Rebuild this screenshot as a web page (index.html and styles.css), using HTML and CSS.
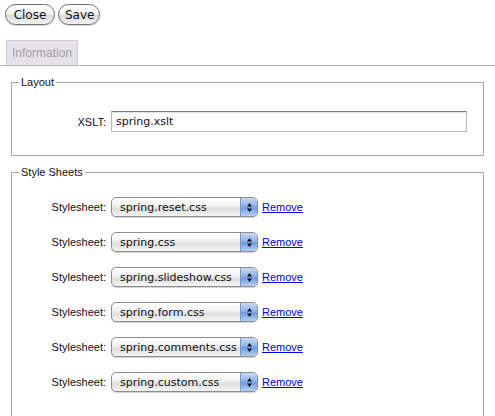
FILE: index.html
```html
<!DOCTYPE html>
<html>
<head>
<meta charset="utf-8">
<link rel="stylesheet" href="styles.css">
</head>
<body>
<div class="toolbar">
  <button class="btn btn-close">Close</button>
  <button class="btn btn-save">Save</button>
</div>
<div class="tabs">
  <div class="tab">Information</div>
</div>
<fieldset class="group group-layout">
  <legend>Layout</legend>
  <div class="row">
    <label class="lbl">XSLT:</label>
    <div class="textbox">spring.xslt</div>
  </div>
</fieldset>
<fieldset class="group group-sheets">
  <legend>Style Sheets</legend>
  <div class="row sheet"><label class="lbl">Stylesheet:</label><div class="select"><span class="val">spring.reset.css</span><span class="arrow"><svg width="7" height="11" viewBox="0 0 7 11"><path d="M3.5 1 L6 4.5 L1 4.5Z M3.5 10 L6 6.5 L1 6.5Z" fill="#111"/></svg></span></div><a class="remove" href="#">Remove</a></div>
  <div class="row sheet"><label class="lbl">Stylesheet:</label><div class="select"><span class="val">spring.css</span><span class="arrow"><svg width="7" height="11" viewBox="0 0 7 11"><path d="M3.5 1 L6 4.5 L1 4.5Z M3.5 10 L6 6.5 L1 6.5Z" fill="#111"/></svg></span></div><a class="remove" href="#">Remove</a></div>
  <div class="row sheet"><label class="lbl">Stylesheet:</label><div class="select"><span class="val">spring.slideshow.css</span><span class="arrow"><svg width="7" height="11" viewBox="0 0 7 11"><path d="M3.5 1 L6 4.5 L1 4.5Z M3.5 10 L6 6.5 L1 6.5Z" fill="#111"/></svg></span></div><a class="remove" href="#">Remove</a></div>
  <div class="row sheet"><label class="lbl">Stylesheet:</label><div class="select"><span class="val">spring.form.css</span><span class="arrow"><svg width="7" height="11" viewBox="0 0 7 11"><path d="M3.5 1 L6 4.5 L1 4.5Z M3.5 10 L6 6.5 L1 6.5Z" fill="#111"/></svg></span></div><a class="remove" href="#">Remove</a></div>
  <div class="row sheet"><label class="lbl">Stylesheet:</label><div class="select"><span class="val">spring.comments.css</span><span class="arrow"><svg width="7" height="11" viewBox="0 0 7 11"><path d="M3.5 1 L6 4.5 L1 4.5Z M3.5 10 L6 6.5 L1 6.5Z" fill="#111"/></svg></span></div><a class="remove" href="#">Remove</a></div>
  <div class="row sheet"><label class="lbl">Stylesheet:</label><div class="select"><span class="val">spring.custom.css</span><span class="arrow"><svg width="7" height="11" viewBox="0 0 7 11"><path d="M3.5 1 L6 4.5 L1 4.5Z M3.5 10 L6 6.5 L1 6.5Z" fill="#111"/></svg></span></div><a class="remove" href="#">Remove</a></div>
</fieldset>
</body>
</html>
```
FILE: styles.css
```css
html, body {
  margin: 0;
  padding: 0;
  background: #fff;
  font-family: "Liberation Sans", Arial, sans-serif;
  font-size: 11px;
  color: #111;
  overflow: hidden;
}
.toolbar {
  display: flex;
  gap: 3px;
  padding: 4px 0 0 5px;
}
.btn {
  height: 21px;
  margin: 0;
  padding: 0 6px;
  border: 1px solid #6f6f6f;
  border-radius: 11px;
  background: linear-gradient(#ffffff 0%, #f4f4f4 45%, #dcdcdc 55%, #f2f2f2 100%);
  font-family: "DejaVu Sans", sans-serif;
  font-size: 12px;
  color: #111;
  box-shadow: 0 1px 1px rgba(0,0,0,0.15);
}
.btn-close { width: 50px; }
.btn-save { width: 42px; }
.tabs {
  margin-top: 15px;
  padding-left: 6px;
  border-bottom: 1px solid #b5b5b5;
  display: flex;
}
.tab {
  width: 70px;
  height: 24px;
  line-height: 24px;
  text-align: center;
  background: #e6e1e9;
  border: 1px solid #cfcbd2;
  border-bottom: none;
  color: #a3a0a6;
  font-size: 12px;
}
.group {
  margin: 10px 11px 0;
  padding: 0;
  border: 1px solid #a8a8a8;
  min-width: 0;
}
.group legend {
  margin-left: 7px;
  padding: 0 2px;
  font-size: 11px;
  color: #111;
}
.group-layout {
  padding-top: 23px;
  padding-bottom: 23px;
}
.group-sheets {
  margin-top: 10px;
  padding-top: 19px;
  height: 260px;
  box-sizing: border-box;
}
.row {
  display: flex;
  align-items: center;
}
.lbl {
  width: 99px;
  text-align: right;
  padding-right: 5px;
  box-sizing: border-box;
  flex: none;
}
.textbox {
  width: 356px;
  height: 21px;
  box-sizing: border-box;
  border: 1px solid #b8b8b8;
  border-top-color: #7c7c7c;
  box-shadow: inset 0 1px 1px rgba(0,0,0,0.12);
  font-family: "DejaVu Sans", sans-serif;
  font-size: 11px;
  line-height: 19px;
  padding-left: 4px;
}
.sheet { height: 20px; margin-bottom: 15px; }
.select {
  width: 147px;
  height: 20px;
  box-sizing: border-box;
  border: 1px solid #8d8d8d;
  border-radius: 5px;
  background: linear-gradient(#ffffff 0%, #f3f3f3 40%, #dedede 60%, #f6f6f6 100%);
  display: flex;
  align-items: center;
  overflow: hidden;
  box-shadow: 0 1px 1px rgba(0,0,0,0.18);
  flex: none;
}
.val {
  flex: 1;
  padding-left: 8px;
  font-family: "DejaVu Sans", sans-serif;
  font-size: 11px;
  white-space: nowrap;
  overflow: hidden;
}
.arrow {
  width: 16px;
  height: 100%;
  display: flex;
  align-items: center;
  justify-content: center;
  background: linear-gradient(#c8d9f3 0%, #8fb3eb 45%, #6a9ae6 55%, #b6d0f5 100%);
  border-left: 1px solid #7f95bb;
}
.remove {
  margin-left: 4px;
  color: #0000ee;
  text-decoration: underline;
  font-size: 11px;
}
```
